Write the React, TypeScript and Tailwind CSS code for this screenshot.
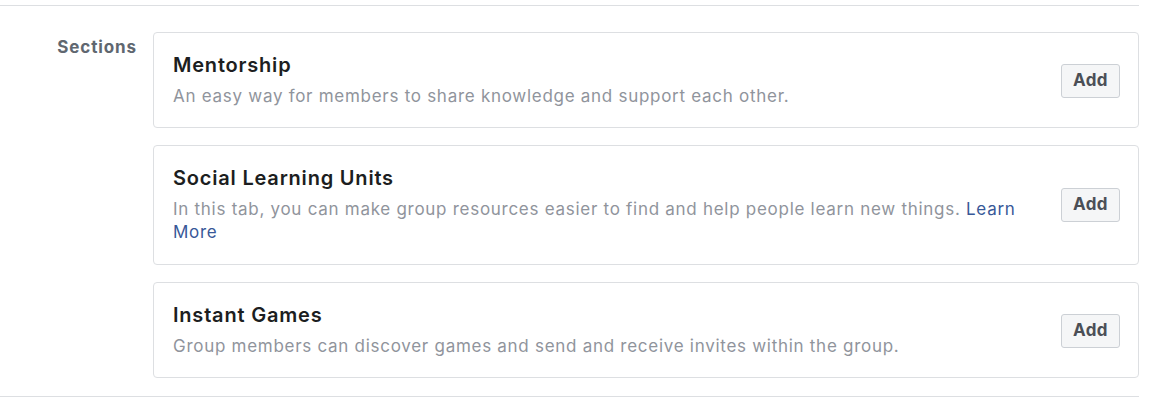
import { ReactNode } from "react";

type Section = {
  title: string;
  desc: ReactNode;
  multiline?: boolean;
};

const SECTIONS: Section[] = [
  {
    title: "Mentorship",
    desc: "An easy way for members to share knowledge and support each other.",
  },
  {
    title: "Social Learning Units",
    desc: (
      <>
        In this tab, you can make group resources easier to find and help people learn new
        things. <a className="text-[#385898]">Learn More</a>
      </>
    ),
    multiline: true,
  },
  {
    title: "Instant Games",
    desc: "Group members can discover games and send and receive invites within the group.",
  },
];

function SectionCard({ section }: { section: Section }) {
  return (
    <div
      className={
        section.multiline
          ? "flex items-center gap-[24px] rounded-[4px] border border-[#dddfe2] bg-white pb-[20px] pl-[19px] pr-[18px] pt-[20px]"
          : "flex items-center gap-[24px] rounded-[4px] border border-[#dddfe2] bg-white pb-[19px] pl-[19px] pr-[18px] pt-[20px]"
      }
    >
      <div className="flex-1">
        <h3 className="text-[20px] font-semibold leading-[24px] tracking-[0.8px] text-[#1c1e21]">
          {section.title}
        </h3>
        <p className="mt-[8px] text-[17px] leading-[23px] tracking-[0.72px] text-[#90949c]">
          {section.desc}
        </p>
      </div>
      <button className="h-[34px] w-[59px] rounded-[3px] border border-[#ccd0d5] bg-[#f5f6f7] text-[17px] font-bold tracking-[0.4px] text-[#4b4f56]">
        Add
      </button>
    </div>
  );
}

export default function App() {
  return (
    <div className="min-h-[408px] bg-white pt-[5px] font-['Inter',sans-serif]">
      <div className="w-[1139px] border-y border-[#dddfe2]">
        <div className="flex pb-[18px] pt-[26px]">
          <div className="w-[137px] pt-[5px] text-right text-[17px] font-bold leading-[20px] tracking-[0.9px] text-[#606770]">
            Sections
          </div>
          <div className="ml-[16px] flex flex-1 flex-col gap-[17px]">
            {SECTIONS.map((s) => (
              <SectionCard key={s.title} section={s} />
            ))}
          </div>
        </div>
      </div>
    </div>
  );
}
